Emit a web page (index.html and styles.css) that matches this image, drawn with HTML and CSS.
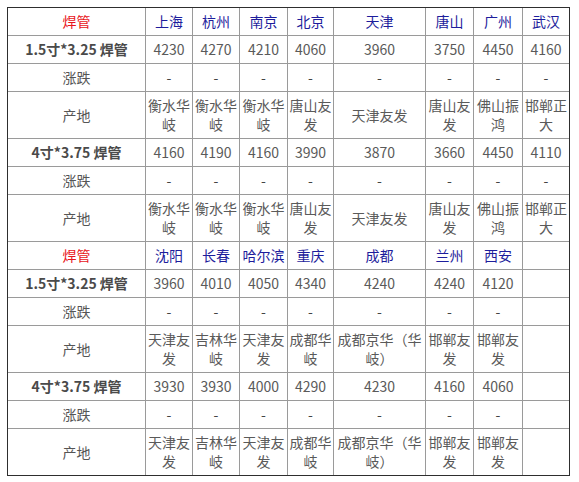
FILE: index.html
```html
<!DOCTYPE html>
<html lang="zh">
<head>
<meta charset="utf-8">
<link rel="stylesheet" href="styles.css">
</head>
<body>
<div class="wrap">
<table class="price">
<colgroup>
<col class="c1"><col class="c2"><col class="c3"><col class="c4"><col class="c5"><col class="c6"><col class="c7"><col class="c8"><col class="c9">
</colgroup>
<tbody>
<tr class="head"><td class="title">焊管</td><td>上海</td><td>杭州</td><td>南京</td><td>北京</td><td>天津</td><td>唐山</td><td>广州</td><td>武汉</td></tr>
<tr><td class="lbl b">1.5寸*3.25 焊管</td><td>4230</td><td>4270</td><td>4210</td><td>4060</td><td>3960</td><td>3750</td><td>4450</td><td>4160</td></tr>
<tr><td class="lbl">涨跌</td><td class="d">-</td><td class="d">-</td><td class="d">-</td><td class="d">-</td><td class="d">-</td><td class="d">-</td><td class="d">-</td><td class="d">-</td></tr>
<tr><td class="lbl">产地</td><td>衡水华<br>岐</td><td>衡水华<br>岐</td><td>衡水华<br>岐</td><td>唐山友<br>发</td><td>天津友发</td><td>唐山友<br>发</td><td>佛山振<br>鸿</td><td>邯郸正<br>大</td></tr>
<tr><td class="lbl b">4寸*3.75 焊管</td><td>4160</td><td>4190</td><td>4160</td><td>3990</td><td>3870</td><td>3660</td><td>4450</td><td>4110</td></tr>
<tr><td class="lbl">涨跌</td><td class="d">-</td><td class="d">-</td><td class="d">-</td><td class="d">-</td><td class="d">-</td><td class="d">-</td><td class="d">-</td><td class="d">-</td></tr>
<tr><td class="lbl">产地</td><td>衡水华<br>岐</td><td>衡水华<br>岐</td><td>衡水华<br>岐</td><td>唐山友<br>发</td><td>天津友发</td><td>唐山友<br>发</td><td>佛山振<br>鸿</td><td>邯郸正<br>大</td></tr>
<tr class="head"><td class="title">焊管</td><td>沈阳</td><td>长春</td><td>哈尔滨</td><td>重庆</td><td>成都</td><td>兰州</td><td>西安</td><td></td></tr>
<tr><td class="lbl b">1.5寸*3.25 焊管</td><td>3960</td><td>4010</td><td>4050</td><td>4340</td><td>4240</td><td>4240</td><td>4120</td><td></td></tr>
<tr><td class="lbl">涨跌</td><td class="d">-</td><td class="d">-</td><td class="d">-</td><td class="d">-</td><td class="d">-</td><td class="d">-</td><td class="d">-</td><td></td></tr>
<tr><td class="lbl">产地</td><td>天津友<br>发</td><td>吉林华<br>岐</td><td>天津友<br>发</td><td>成都华<br>岐</td><td>成都京华（华<br>岐）</td><td>邯郸友<br>发</td><td>邯郸友<br>发</td><td></td></tr>
<tr><td class="lbl b">4寸*3.75 焊管</td><td>3930</td><td>3930</td><td>4000</td><td>4290</td><td>4230</td><td>4160</td><td>4060</td><td></td></tr>
<tr><td class="lbl">涨跌</td><td class="d">-</td><td class="d">-</td><td class="d">-</td><td class="d">-</td><td class="d">-</td><td class="d">-</td><td class="d">-</td><td></td></tr>
<tr><td class="lbl">产地</td><td>天津友<br>发</td><td>吉林华<br>岐</td><td>天津友<br>发</td><td>成都华<br>岐</td><td>成都京华（华<br>岐）</td><td>邯郸友<br>发</td><td>邯郸友<br>发</td><td></td></tr>
</tbody>
</table>
</div>
</body>
</html>
```
FILE: styles.css
```css
html, body {
  margin: 0;
  padding: 0;
  background: #ffffff;
}
.wrap {
  padding: 7px;
}
.price {
  border-collapse: separate;
  border-spacing: 0;
  table-layout: fixed;
  width: 563px;
  border: 1px solid #2e2e2e;
  font-family: "Noto Sans CJK SC", "Noto Sans", sans-serif;
  font-size: 14px;
  color: #5a5a5a;
}
.c1 { width: 138px; }
.c2 { width: 47px; }
.c3 { width: 47px; }
.c4 { width: 48px; }
.c5 { width: 46px; }
.c6 { width: 92px; }
.c7 { width: 48px; }
.c8 { width: 49px; }
.c9 { width: 46px; }
.price td {
  box-sizing: border-box;
  text-align: center;
  vertical-align: middle;
  line-height: 19px;
  padding: 4px 0;
  border-right: 1px solid #9a9a9a;
  border-bottom: 1px solid #9a9a9a;
  white-space: nowrap;
}
.price td:last-child {
  border-right: none;
}
.price tr:last-child td {
  border-bottom: none;
}
.head td {
  color: #1d1d9c;
}
.head td.title {
  color: #e8161b;
}
.lbl {
  color: #555555;
}
.lbl.b {
  font-weight: bold;
  color: #4a4a4a;
}
.d {
  color: #444444;
}
```
